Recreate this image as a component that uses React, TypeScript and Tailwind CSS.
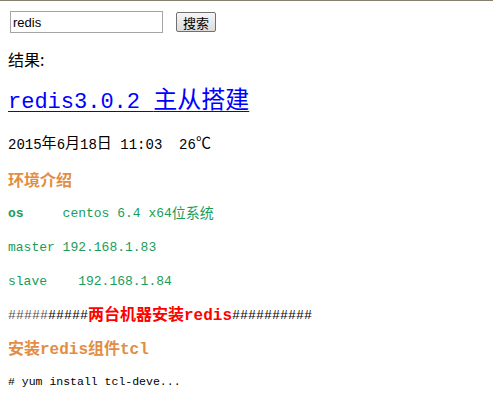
import { useState } from "react";

const MONO = "font-['Liberation_Mono','Noto_Sans_CJK_SC',monospace]";

export default function App() {
  const [keyword, setKeyword] = useState("redis");

  return (
    <div className="min-h-[419px] w-[493px] bg-white border-t border-[#8b8070] px-2 text-black">
      {/* 搜索栏 */}
      <div className="flex items-center pt-[10px]">
        <input
          type="text"
          value={keyword}
          onChange={(e) => setKeyword(e.target.value)}
          className="ml-[2px] h-[22px] w-[153px] border border-[#a5a5a5] px-[2px] text-[13px] font-['Liberation_Sans','Noto_Sans_CJK_SC',sans-serif] outline-none"
        />
        <button className="ml-[13px] h-[20px] w-[40px] rounded-[2px] border border-[#707070] bg-gradient-to-b from-[#f6f6f6] to-[#dcdcdc] text-[13px] leading-none font-['Noto_Sans_CJK_SC',sans-serif]">
          搜索
        </button>
      </div>

      <div className="mt-[15px] flex h-[22px] items-center text-[16px] font-['Noto_Sans_CJK_SC',sans-serif]">
        结果:
      </div>

      {/* 标题 */}
      <div className="mt-[18px] flex h-[28px] items-center">
        <a href="#" className={`text-[#0000ff] underline underline-offset-[3px] ${MONO}`}>
          <span className="text-[22px]">redis3.0.2 </span>
          <span className="text-[24px]">主从搭建</span>
        </a>
      </div>

      <div className={`mt-[18px] flex h-[22px] items-center whitespace-pre text-[14px] ${MONO}`}>
        <span>2015</span>
        <span className="text-[15px]">年</span>
        <span>6</span>
        <span className="text-[15px]">月</span>
        <span>18</span>
        <span className="text-[15px]">日</span>
        <span>{" 11:03  26"}</span>
        <span className="text-[15px]">℃</span>
      </div>

      <div className="mt-[12px] flex h-[22px] items-center text-[16px] font-bold text-[#e38d44] font-['Noto_Sans_CJK_SC',sans-serif]">
        环境介绍
      </div>

      {/* 环境 */}
      <div className={`mt-[13px] flex h-[22px] items-center whitespace-pre text-[13px] text-[#1a9c5a] ${MONO}`}>
        <span className="font-bold">os</span>
        <span>{"     centos 6.4 x64"}</span>
        <span className="text-[14px]">位系统</span>
      </div>
      <div className={`mt-[12px] flex h-[22px] items-center whitespace-pre text-[13px] text-[#1a9c5a] ${MONO}`}>
        master 192.168.1.83
      </div>
      <div className={`mt-[12px] flex h-[22px] items-center whitespace-pre text-[13px] text-[#1a9c5a] ${MONO}`}>
        {"slave    192.168.1.84"}
      </div>

      <div className={`mt-[12px] flex h-[22px] items-center whitespace-pre ${MONO}`}>
        <span className="text-[13.33px] text-[#555555]">#####</span>
        <span className="text-[13.33px]">#####</span>
        <span className="text-[16px] font-bold text-[#ff0000]">两台机器安装redis</span>
        <span className="text-[13.33px]">##########</span>
      </div>

      <div className={`mt-[12px] flex h-[22px] items-center text-[16px] font-bold text-[#e38d44] ${MONO}`}>
        安装redis组件tcl
      </div>

      <div className={`mt-[10px] flex h-[22px] items-center whitespace-pre text-[11.5px] ${MONO}`}>
        # yum install tcl-deve...
      </div>
    </div>
  );
}
